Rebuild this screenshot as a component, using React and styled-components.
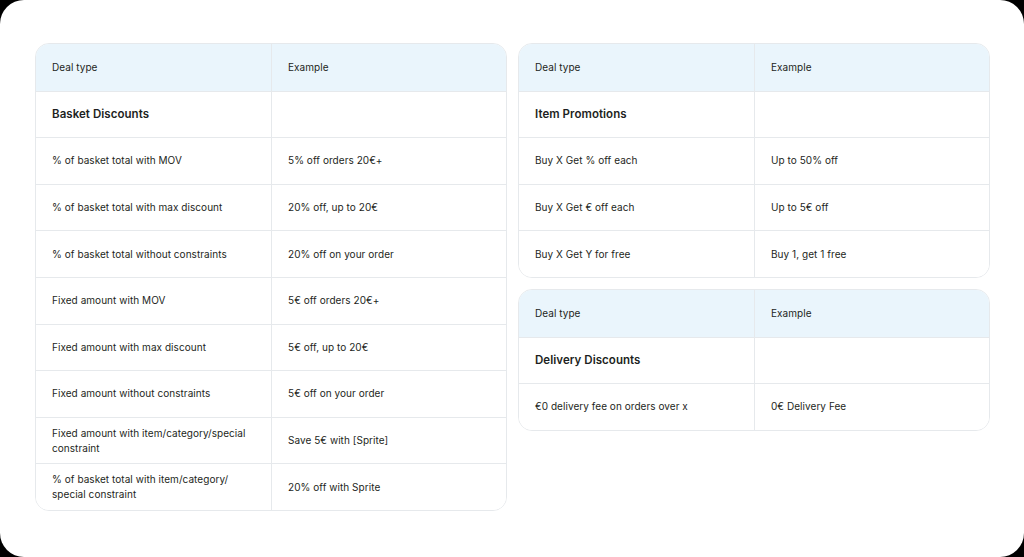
import React from "react";
import styled, { createGlobalStyle } from "styled-components";

const G = createGlobalStyle`
  html,body{margin:0;background:#000;}
  body{font-family:Inter,"Noto Sans",sans-serif;}
`;
const Page = styled.div`
  width:1024px;height:557px;background:#fff;border-radius:24px;box-sizing:border-box;
  padding:43px 34px 0 35px;display:flex;gap:11px;align-items:flex-start;
`;
const Col = styled.div`display:flex;flex-direction:column;gap:11px;width:472px;`;
const Table = styled.div`
  border:1px solid #e6e9ec;border-radius:14px;overflow:hidden;width:472px;box-sizing:border-box;
`;
const Row = styled.div`
  display:grid;grid-template-columns:235px 1fr;height:46.6px;
  background:${p=>p.$head?"#eaf5fc":"#fff"};
  border-top:${p=>p.$first?"none":"1px solid #e6e9ec"};
  box-sizing:border-box;
`;
const Cell = styled.div`
  display:flex;align-items:center;padding:0 16px 0 16px;font-size:${p=>p.$bold?"11.5px":"10px"};
  font-weight:${p=>p.$bold?600:400};color:#1d1f22;line-height:15px;letter-spacing:0.05px;
  & + & {border-left:1px solid #e6e9ec;}
`;

const T = ({ group, rows }) => (
  <Table>
    <Row $head $first><Cell>Deal type</Cell><Cell>Example</Cell></Row>
    <Row><Cell $bold>{group}</Cell><Cell /></Row>
    {rows.map(([a, b]) => (
      <Row key={a}><Cell>{a}</Cell><Cell>{b}</Cell></Row>
    ))}
  </Table>
);

export default function App() {
  return (
    <>
      <G />
      <Page>
        <T group="Basket Discounts" rows={[
          ["% of basket total with MOV", "5% off orders 20€+"],
          ["% of basket total with max discount", "20% off, up to 20€"],
          ["% of basket total without constraints", "20% off on your order"],
          ["Fixed amount with MOV", "5€ off orders 20€+"],
          ["Fixed amount with max discount", "5€ off, up to 20€"],
          ["Fixed amount without constraints", "5€ off on your order"],
          ["Fixed amount with item/category/special constraint", "Save 5€ with [Sprite]"],
          ["% of basket total with item/category/ special constraint", "20% off with Sprite"],
        ]} />
        <Col>
          <T group="Item Promotions" rows={[
            ["Buy X Get % off each", "Up to 50% off"],
            ["Buy X Get € off each", "Up to 5€ off"],
            ["Buy X Get Y for free", "Buy 1, get 1 free"],
          ]} />
          <T group="Delivery Discounts" rows={[
            ["€0 delivery fee on orders over x", "0€ Delivery Fee"],
          ]} />
        </Col>
      </Page>
    </>
  );
}
